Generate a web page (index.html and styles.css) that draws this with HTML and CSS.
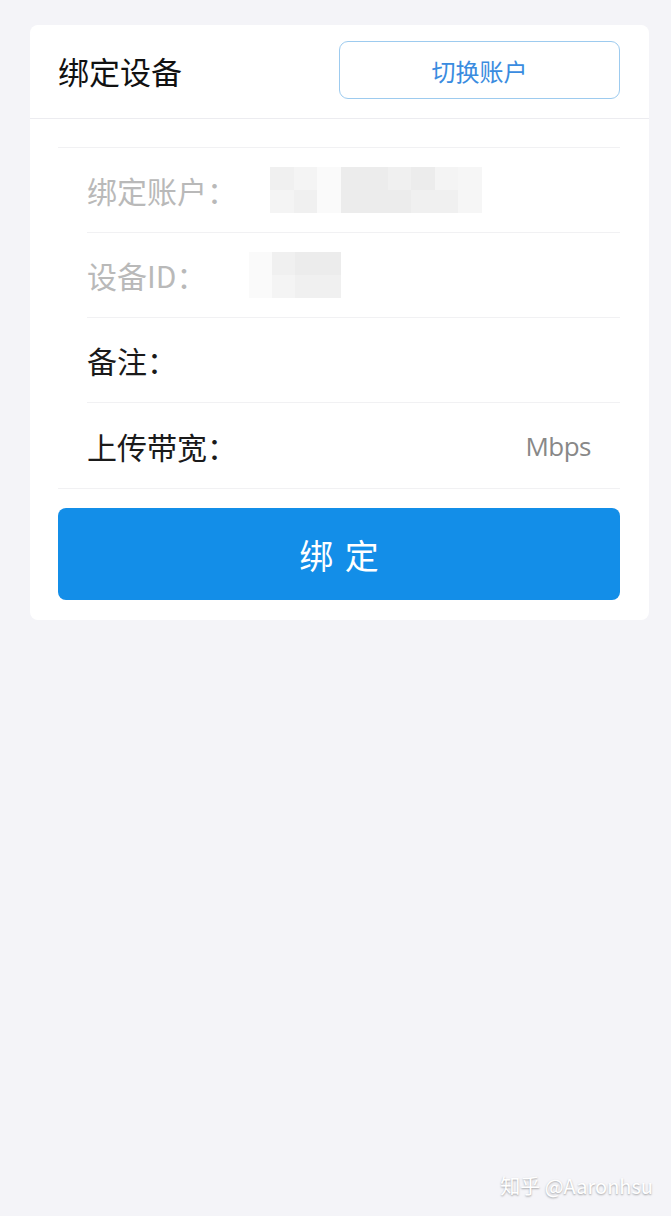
FILE: index.html
```html
<!DOCTYPE html>
<html lang="zh-CN">
<head>
<meta charset="utf-8">
<title>绑定设备</title>
<link rel="stylesheet" href="styles.css">
</head>
<body>
<div class="card">
  <div class="card-header">
    <div class="title">绑定设备</div>
    <button class="switch-btn">切换账户</button>
  </div>
  <div class="card-body">
    <div class="list">
      <div class="row">
        <span class="label muted">绑定账户：</span>
        <div class="mosaic mosaic-account">
          <i class="c2"></i><i class="c3"></i><i class="c5"></i><i class="c1"></i><i class="c1"></i><i class="c2"></i><i class="c1"></i><i class="c3"></i><i class="c4"></i>
          <i class="c3"></i><i class="c2"></i><i class="c5"></i><i class="c1"></i><i class="c1"></i><i class="c1"></i><i class="c2"></i><i class="c2"></i><i class="c4"></i>
        </div>
      </div>
      <div class="row">
        <span class="label muted">设备ID：</span>
        <div class="mosaic mosaic-id">
          <i class="c5"></i><i class="c2"></i><i class="c1"></i><i class="c1"></i>
          <i class="c5"></i><i class="c3"></i><i class="c2"></i><i class="c2"></i>
        </div>
      </div>
      <div class="row">
        <span class="label">备注：</span>
      </div>
      <div class="row last">
        <span class="label">上传带宽：</span>
        <span class="unit">Mbps</span>
      </div>
    </div>
    <button class="bind-btn">绑 定</button>
  </div>
</div>
<div class="watermark">知乎 @Aaronhsu</div>
</body>
</html>
```

FILE: styles.css
```css
html, body {
  margin: 0;
  padding: 0;
}
body {
  background: #f4f4f8;
  font-family: "Noto Sans CJK SC", "Noto Sans", "Liberation Sans", sans-serif;
  min-height: 1216px;
  position: relative;
  padding: 25px 22px 0 30px;
  box-sizing: border-box;
}
.card {
  background: #ffffff;
  border-radius: 8px;
  width: 619px;
}
.card-header {
  height: 93px;
  display: flex;
  align-items: center;
  justify-content: space-between;
  padding: 0 29px 0 28px;
  border-bottom: 1px solid #ececf0;
}
.title {
  font-size: 31px;
  color: #111;
  line-height: 1;
  margin-top: -2px;
}
.switch-btn {
  width: 281px;
  height: 58px;
  border: 1px solid #9dcbef;
  border-radius: 9px;
  background: #fff;
  color: #3a8ce0;
  font-family: inherit;
  font-size: 24px;
  padding: 0;
  margin-top: -3px;
}
.card-body {
  padding: 28px 29px 20px 28px;
}
.list {
  border-top: 1px solid #f1f1f3;
  border-bottom: 1px solid #f1f1f3;
}
.row {
  margin-left: 29px;
  height: 85px;
  box-sizing: border-box;
  border-bottom: 1px solid #f1f1f3;
  display: flex;
  align-items: center;
  padding-right: 29px;
}
.row.last {
  border-bottom: none;
}
.label {
  font-size: 30px;
  color: #1a1a1a;
  line-height: 1;
}
.label.muted {
  color: #b9b9b9;
}
.unit {
  margin-left: auto;
  font-family: "Open Sans", "Noto Sans", sans-serif;
  font-size: 26px;
  color: #888;
  letter-spacing: -0.5px;
}
.mosaic {
  display: grid;
  grid-auto-rows: 23px;
}
.mosaic i {
  display: block;
}
.mosaic-account {
  grid-template-columns: repeat(9, 23.5px);
  margin-left: 33px;
}
.mosaic-id {
  grid-template-columns: repeat(4, 23px);
  margin-left: 43px;
}
.c1 { background: #ececec; }
.c2 { background: #f0f0f0; }
.c3 { background: #f4f4f4; }
.c4 { background: #f6f6f6; }
.c5 { background: #fafafa; }
.bind-btn {
  display: block;
  width: 100%;
  height: 92px;
  margin-top: 19px;
  border: none;
  border-radius: 8px;
  background: #138ee8;
  color: #fff;
  font-family: inherit;
  font-size: 34px;
  letter-spacing: 2px;
  text-indent: 2px;
  padding: 0;
}
.watermark {
  position: absolute;
  right: 18px;
  bottom: 16px;
  font-size: 20px;
  color: #fff;
  text-shadow: 0 1px 2px rgba(0, 0, 0, 0.35);
}
```
